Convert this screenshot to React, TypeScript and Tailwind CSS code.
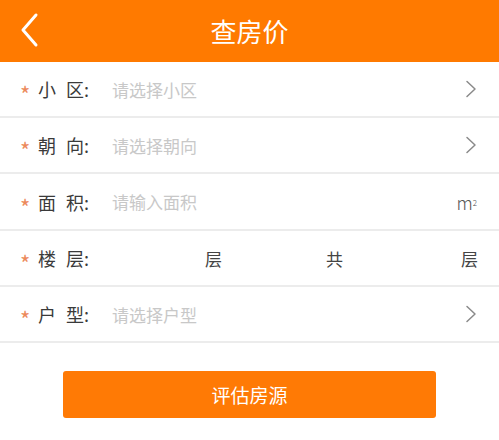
import React from "react";

const font = { fontFamily: '"Noto Sans CJK SC", "Noto Sans", sans-serif' };

function ChevronRight() {
  return (
    <svg width="12" height="18" viewBox="0 0 12 18" fill="none">
      <path d="M2 1.5 L10 9 L2 16.5" stroke="#8a8a8a" strokeWidth="1.5" strokeLinecap="round" strokeLinejoin="round" />
    </svg>
  );
}

function Label({ a, b }: { a: string; b: string }) {
  return (
    <div className="flex items-center w-[112px] shrink-0">
      <span className="w-[38px] pl-[20px] text-[#ec8a5b] text-[22px] leading-none pt-[8px]">*</span>
      <span className="text-[18px] text-[#3a3a3a] leading-none">{a}</span>
      <span className="text-[18px] text-[#3a3a3a] leading-none ml-[10px]">{b}</span>
      <span className="text-[18px] text-[#3a3a3a] leading-none">:</span>
    </div>
  );
}

function Row({ a, b, h, children }: { a: string; b: string; h: string; children?: React.ReactNode }) {
  return (
    <div className={`${h} flex items-center border-b-2 border-[#ececec] box-border`}>
      <Label a={a} b={b} />
      {children}
    </div>
  );
}

export default function App() {
  return (
    <div className="w-[499px] h-[440px] bg-white overflow-hidden" style={font}>
      <div className="h-[62px] bg-[#ff7a00] relative flex items-center justify-center">
        <svg className="absolute left-[18px] top-[12px]" width="22" height="36" viewBox="0 0 22 36" fill="none">
          <path d="M18 3 L5 18 L18 33" stroke="#fff" strokeWidth="3" strokeLinecap="round" strokeLinejoin="round" />
        </svg>
        <span className="text-white text-[26px] leading-none">查房价</span>
      </div>
      <Row a="小" b="区" h="h-[56px]">
        <span className="flex-1 text-[17px] text-[#c8c8c8] leading-none">请选择小区</span>
        <div className="pr-[22px]"><ChevronRight /></div>
      </Row>
      <Row a="朝" b="向" h="h-[56px]">
        <span className="flex-1 text-[17px] text-[#c8c8c8] leading-none">请选择朝向</span>
        <div className="pr-[22px]"><ChevronRight /></div>
      </Row>
      <Row a="面" b="积" h="h-[57px]">
        <span className="flex-1 text-[17px] text-[#c8c8c8] leading-none">请输入面积</span>
        <span className="pr-[22px] text-[18px] text-[#555] leading-none font-light">
          m<sup className="text-[8px] relative -top-[4px]">2</sup>
        </span>
      </Row>
      <Row a="楼" b="层" h="h-[56px]">
        <div className="flex-1 flex items-center text-[17px] text-[#444] leading-none">
          <span className="w-[110px] text-right">层</span>
          <span className="w-[121px] text-right">共</span>
          <span className="w-[135px] text-right">层</span>
        </div>
      </Row>
      <Row a="户" b="型" h="h-[56px]">
        <span className="flex-1 text-[17px] text-[#c8c8c8] leading-none">请选择户型</span>
        <div className="pr-[22px]"><ChevronRight /></div>
      </Row>
      <div className="flex justify-center pt-[28px]">
        <button className="w-[373px] h-[47px] bg-[#ff7a05] rounded-[3px] text-white text-[19px] leading-none flex items-center justify-center">
          评估房源
        </button>
      </div>
    </div>
  );
}
